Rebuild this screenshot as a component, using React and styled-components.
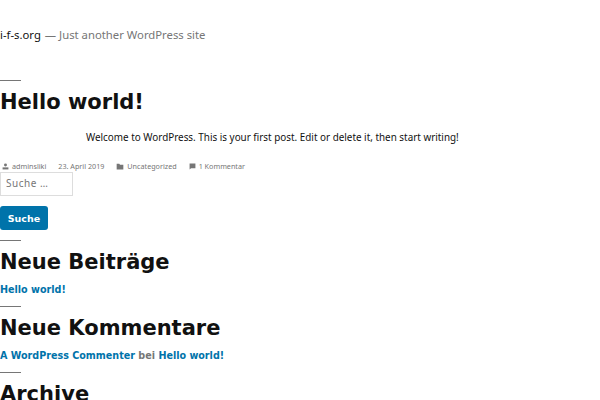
import styled, { createGlobalStyle } from "styled-components";

const GlobalStyle = createGlobalStyle`
  html, body {
    margin: 0;
    padding: 0;
    background: #fff;
  }
  body {
    font-family: "Noto Sans", "DejaVu Sans", sans-serif;
    color: #111;
    overflow: hidden;
  }
`;

function UserIcon() {
  return (
    <svg width="7" height="7" viewBox="0 0 24 24">
      <circle cx="12" cy="7" r="5" fill="#767676" />
      <rect x="2" y="15" width="20" height="7" fill="#767676" />
    </svg>
  );
}

function FolderIcon() {
  return (
    <svg width="8" height="7" viewBox="0 0 24 20">
      <path d="M2 2h8l2 3h10v14H2z" fill="#767676" />
    </svg>
  );
}

function CommentIcon() {
  return (
    <svg width="7" height="7" viewBox="0 0 24 24">
      <path d="M2 2h20v16H7l-5 4z" fill="#767676" />
    </svg>
  );
}

function App() {
  return (
    <Page>
      <GlobalStyle />
      <Header>
        <SiteTitle>i-f-s.org</SiteTitle>
        <Tagline>— Just another WordPress site</Tagline>
      </Header>

      <Section>
        <Rule />
        <PostTitle>Hello world!</PostTitle>
        <PostContent>
          Welcome to WordPress. This is your first post. Edit or delete it, then
          start writing!
        </PostContent>
        <Meta>
          <MetaItem>
            <UserIcon />
            adminsliki
          </MetaItem>
          <MetaItem>23. April 2019</MetaItem>
          <MetaItem>
            <FolderIcon />
            Uncategorized
          </MetaItem>
          <MetaItem>
            <CommentIcon />1 Kommentar
          </MetaItem>
        </Meta>
      </Section>

      <SearchForm>
        <SearchInput placeholder="Suche …" />
        <SearchButton type="button">Suche</SearchButton>
      </SearchForm>

      <Widget>
        <Rule />
        <WidgetTitle>Neue Beiträge</WidgetTitle>
        <WidgetLine>
          <Link>Hello world!</Link>
        </WidgetLine>
      </Widget>

      <Widget>
        <Rule />
        <WidgetTitle>Neue Kommentare</WidgetTitle>
        <WidgetLine>
          <Link>A WordPress Commenter</Link> <Muted>bei</Muted>{" "}
          <Link>Hello world!</Link>
        </WidgetLine>
      </Widget>

      <Widget>
        <Rule />
        <WidgetTitle>Archive</WidgetTitle>
      </Widget>
    </Page>
  );
}

export default App;

const Page = styled.div`
  width: 600px;
  height: 400px;
  overflow: hidden;
`;

const Header = styled.header`
  padding-top: 27px;
  display: flex;
  gap: 4px;
  font-size: 11.3px;
  line-height: 16px;
`;

const SiteTitle = styled.span`
  color: #111;
`;

const Tagline = styled.span`
  color: #767676;
`;

const Section = styled.div`
  margin-top: 37px;
`;

const Rule = styled.hr`
  width: 21px;
  height: 1px;
  margin: 0;
  border: 0;
  background: #767676;
`;

const PostTitle = styled.h1`
  margin: 8px 0 0;
  font-family: "DejaVu Sans", sans-serif;
  font-weight: 700;
  font-size: 21px;
  line-height: 26px;
`;

const PostContent = styled.p`
  margin: 14px 0 0 86px;
  font-size: 9.9px;
  line-height: 16px;
`;

const Meta = styled.div`
  margin-top: 16px;
  padding-left: 2px;
  display: flex;
  gap: 12px;
  font-size: 7.2px;
  line-height: 10px;
  color: #767676;
`;

const MetaItem = styled.span`
  display: inline-flex;
  align-items: center;
  gap: 3px;
`;

const SearchForm = styled.form`
  display: flex;
  flex-direction: column;
  align-items: flex-start;
  gap: 10px;
  margin-top: 1px;
  padding-bottom: 1px;
`;

const SearchInput = styled.input`
  box-sizing: border-box;
  width: 73px;
  height: 24px;
  padding: 0 5px 3px;
  border: 1px solid #ddd;
  font-family: "Noto Sans", sans-serif;
  font-size: 10px;
  letter-spacing: 0.5px;
  color: #111;
  &::placeholder {
    color: #767676;
  }
  &:focus {
    outline: none;
  }
`;

const SearchButton = styled.button`
  width: 48px;
  height: 24px;
  border: 0;
  border-radius: 3px;
  background: #0073aa;
  color: #fff;
  font-family: "DejaVu Sans", sans-serif;
  font-weight: 700;
  font-size: 9.5px;
  padding: 0;
  cursor: pointer;
`;

const Widget = styled.section`
  margin-top: 9px;
`;

const WidgetTitle = styled.h2`
  margin: 9px 0 0;
  font-family: "DejaVu Sans", sans-serif;
  font-weight: 700;
  font-size: 21px;
  line-height: 24px;
`;

const WidgetLine = styled.div`
  margin-top: 9px;
  font-family: "DejaVu Sans", sans-serif;
  font-weight: 700;
  font-size: 9.6px;
  line-height: 14px;
`;

const Link = styled.a`
  color: #0073aa;
  text-decoration: none;
`;

const Muted = styled.span`
  color: #767676;
`;
